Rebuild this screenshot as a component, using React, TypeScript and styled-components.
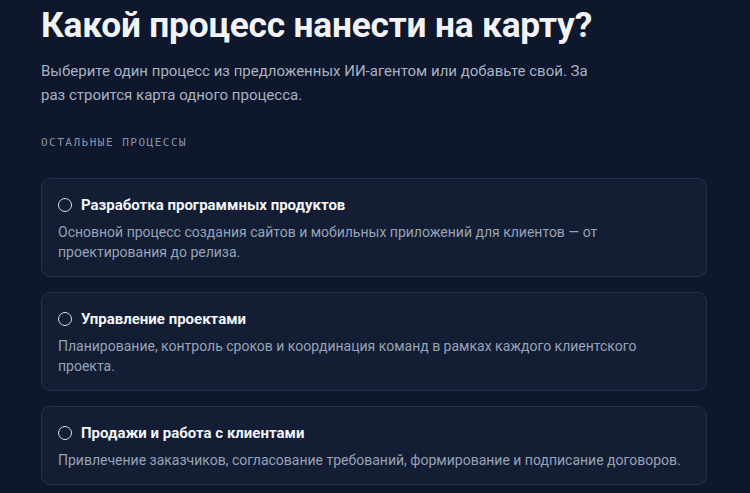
import React from "react";
import styled, { createGlobalStyle } from "styled-components";

const Global = createGlobalStyle`
  html, body { margin: 0; padding: 0; background: #0e172b; }
  body { font-family: Roboto, "Noto Sans", sans-serif; -webkit-font-smoothing: antialiased; }
  * { box-sizing: border-box; }
`;

const Page = styled.div`
  width: 750px;
  min-height: 493px;
  background: #0e172b;
  padding: 3px 43px 0 41px;
  overflow: hidden;
`;

const Title = styled.h1`
  margin: 0;
  font-size: 35.3px;
  line-height: 44px;
  font-weight: 700;
  color: #f1f3f6;
  letter-spacing: -0.2px;
`;

const Lead = styled.p`
  margin: 12px 0 0;
  max-width: 564px;
  font-size: 15px;
  line-height: 24px;
  color: #a7b2c4;
`;

const SectionLabel = styled.div`
  margin-top: 29px;
  font-family: "DejaVu Sans Mono", "Liberation Mono", monospace;
  font-size: 11px;
  letter-spacing: 1.5px;
  color: #8793a8;
  text-transform: uppercase;
`;

const List = styled.div`
  margin-top: 29px;
  display: flex;
  flex-direction: column;
  gap: 15px;
`;

const Card = styled.label`
  display: flex;
  flex-direction: column;
  gap: 7px;
  padding: 16px 16px 14px;
  border: 1px solid #22314b;
  border-radius: 9px;
  background: #131d33;
  cursor: pointer;
`;

const Head = styled.div`
  display: flex;
  align-items: center;
  gap: 9px;
`;

const Radio = styled.span`
  width: 14px;
  height: 14px;
  border-radius: 50%;
  border: 1.5px solid #d9dee6;
  flex: none;
`;

const CardTitle = styled.span`
  font-size: 15px;
  line-height: 20px;
  font-weight: 700;
  color: #f1f4f8;
`;

const CardDesc = styled.p`
  margin: 0;
  font-size: 14px;
  line-height: 20px;
  color: #97a3b6;
  max-width: 628px;
`;

const items = [
  {
    title: "Разработка программных продуктов",
    desc: "Основной процесс создания сайтов и мобильных приложений для клиентов — от проектирования до релиза.",
  },
  {
    title: "Управление проектами",
    desc: "Планирование, контроль сроков и координация команд в рамках каждого клиентского проекта.",
  },
  {
    title: "Продажи и работа с клиентами",
    desc: "Привлечение заказчиков, согласование требований, формирование и подписание договоров.",
  },
];

export default function App() {
  return (
    <Page>
      <Global />
      <Title>Какой процесс нанести на карту?</Title>
      <Lead>
        Выберите один процесс из предложенных ИИ-агентом или добавьте свой. За раз строится карта одного процесса.
      </Lead>
      <SectionLabel>Остальные процессы</SectionLabel>
      <List>
        {items.map((it) => (
          <Card key={it.title}>
            <Head>
              <Radio />
              <CardTitle>{it.title}</CardTitle>
            </Head>
            <CardDesc>{it.desc}</CardDesc>
          </Card>
        ))}
      </List>
    </Page>
  );
}
